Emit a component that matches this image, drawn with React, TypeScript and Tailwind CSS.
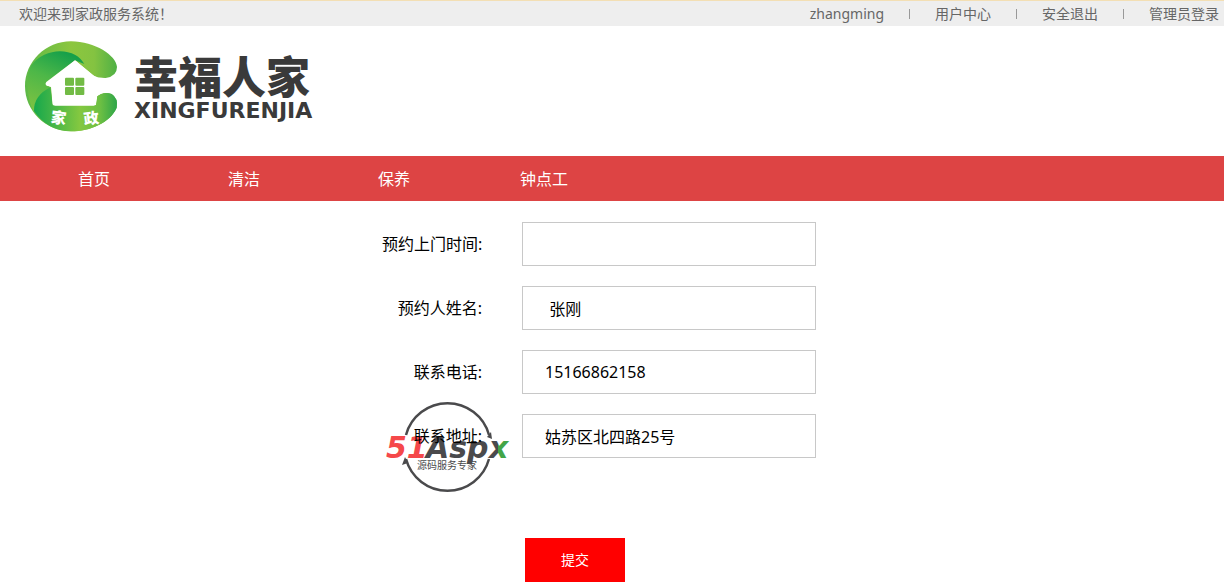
import { FC, Fragment } from "react";

const userLinks = ["zhangming", "用户中心", "安全退出", "管理员登录"];

const navItems = ["首页", "清洁", "保养", "钟点工"];

const fields = [
  { id: "time", label: "预约上门时间:", value: "" },
  { id: "name", label: "预约人姓名:", value: " 张刚" },
  { id: "phone", label: "联系电话:", value: "15166862158" },
  { id: "address", label: "联系地址:", value: "姑苏区北四路25号" },
];

const HouseLogo: FC = () => (
  <svg viewBox="0 0 345 315" className="h-[105px] w-[115px]" aria-hidden="true">
    <defs>
      <linearGradient id="ring" x1="0" y1="0" x2="1" y2="0">
        <stop offset="0" stopColor="#5db947" />
        <stop offset="0.5" stopColor="#8cc63f" />
        <stop offset="0.75" stopColor="#84c341" />
        <stop offset="1" stopColor="#4fb045" />
      </linearGradient>
      <linearGradient id="leaf" x1="0.6" y1="0" x2="0.2" y2="1">
        <stop offset="0" stopColor="#16a04a" />
        <stop offset="0.45" stopColor="#4db748" />
        <stop offset="1" stopColor="#7cc242" />
      </linearGradient>
      <linearGradient id="base" x1="0" y1="0" x2="1" y2="0">
        <stop offset="0" stopColor="#16a84c" />
        <stop offset="0.55" stopColor="#84c840" />
        <stop offset="0.8" stopColor="#6cbf43" />
        <stop offset="1" stopColor="#2da549" />
      </linearGradient>
    </defs>
    <path
      d="M180 76 L236 122 Q250 130 272 129 Q306 124 306 96 C304 62 240 19 168 19 C92 19 30 80 30 154 C30 228 92 289 168 289 C226 289 286 262 305 218 Q310 190 290 177 Q266 168 247 184 L243 211 L113 211 L108 156 L92 151 Z"
      fill="url(#ring)"
    />
    <path
      d="M48 92 C82 48 140 38 181 60 Q196 68 208 87 L180 76 L94 141 L92 151 L106 157 Q64 180 57 228 C38 200 30 130 48 92 Z"
      fill="url(#leaf)"
    />
    <path
      d="M106 157 L113 211 L243 211 L247 184 Q266 168 290 177 Q310 190 305 218 C286 262 226 289 168 289 C122 289 82 266 57 228 Q56 182 106 157 Z"
      fill="url(#base)"
    />
    <path
      d="M180 76 L94 141 Q88 149 97 152 L110 155 L113 206 Q114 212 121 212 L236 212 Q243 212 243 205 L246 180 L272 172 L272 129 L246 128 L234 120 Z"
      fill="#fff"
    />
    <g fill="#72bb45">
      <rect x="150" y="128" width="27" height="24" rx="3" />
      <rect x="181" y="128" width="27" height="24" rx="3" />
      <rect x="150" y="156" width="27" height="24" rx="3" />
      <rect x="181" y="156" width="27" height="24" rx="3" />
    </g>
    <g
      className="font-['Noto_Sans_CJK_SC',sans-serif] font-black"
      fill="#fff"
      fontSize="46"
      textAnchor="middle"
    >
      <text x="131" y="265" transform="rotate(8 131 248)">家</text>
      <text x="229" y="267" transform="rotate(-8 229 250)">政</text>
    </g>
  </svg>
);

const Watermark: FC = () => (
  <svg
    viewBox="0 0 124 92"
    className="pointer-events-none absolute -top-3 left-1 h-[92px] w-[124px]"
    aria-hidden="true"
  >
    <defs>
      <linearGradient id="xmark" x1="0" y1="0" x2="1" y2="0">
        <stop offset="0.5" stopColor="#4a4a4c" />
        <stop offset="0.5" stopColor="#43a548" />
      </linearGradient>
    </defs>
    <g fill="none" stroke="#4a4a4c" strokeWidth="2.5">
      <path d="M20 33 A43 43 0 0 1 103 33" />
      <path d="M20 57 A43 43 0 0 0 103 57" />
    </g>
    <path d="M16 63 L19 55 L22 61 Z M101 35 L105 30 L106 37 Z" fill="#4a4a4c" />
    <g
      className="font-['DejaVu_Sans',sans-serif] font-bold italic"
      fontSize="30"
    >
      <text x="0" y="56" fill="#f5484a">51</text>
      <text x="40" y="56" fill="#4a4a4c">Asp</text>
      <text x="103" y="56" fill="url(#xmark)">x</text>
    </g>
    <text
      x="61"
      y="67"
      className="font-['Noto_Sans_CJK_SC',sans-serif]"
      fontSize="10"
      fill="#4a4a4c"
      textAnchor="middle"
    >
      源码服务专家
    </text>
  </svg>
);

const App: FC = () => {
  return (
    <div className="bg-white font-['Noto_Sans','Noto_Sans_CJK_SC',sans-serif] text-base text-black">
      <div className="flex h-[26px] items-center justify-between border-t border-[#f3dfb4] bg-[#eee] pr-[5px] pl-[19px] text-sm text-[#666]">
        <p>欢迎来到家政服务系统！</p>
        <div className="flex items-center gap-[25px]">
          {userLinks.map((link, i) => (
            <Fragment key={link}>
              {i > 0 && <span className="h-2.5 w-px bg-[#999]" />}
              <a href="#">{link}</a>
            </Fragment>
          ))}
        </div>
      </div>

      <header className="flex h-[130px] items-start gap-1 pt-[9px] pl-[15px]">
        <HouseLogo />
        <div className="pt-4 text-[#3a3a3a]">
          <p className="font-['Noto_Sans_CJK_SC',sans-serif] text-[44px] leading-[48px] font-black">
            幸福人家
          </p>
          <p className="font-['DejaVu_Sans',sans-serif] text-[22px] leading-6 font-bold">
            XINGFURENJIA
          </p>
        </div>
      </header>

      <nav className="h-[45px] bg-[#dd4444] pl-[19px] text-white">
        <ul className="flex h-full items-center">
          {navItems.map((item) => (
            <li key={item} className="w-[150px] text-center">
              <a href="#">{item}</a>
            </li>
          ))}
        </ul>
      </nav>

      <form
        className="mx-auto w-[460px] pt-[21px] pb-1.5"
        onSubmit={(e) => e.preventDefault()}
      >
        <div className="flex flex-col gap-5">
          {fields.map((field) => (
            <div key={field.id} className="relative flex items-center gap-10">
              {field.id === "address" && <Watermark />}
              <label
                htmlFor={field.id}
                className="relative w-[100px] text-right whitespace-nowrap"
              >
                {field.label}
              </label>
              <input
                id={field.id}
                type="text"
                defaultValue={field.value}
                className="h-11 w-[294px] border border-[#c8c8c8] bg-white px-[22px] outline-none"
              />
            </div>
          ))}
        </div>
        <button
          type="submit"
          className="mt-20 ml-[143px] block h-11 w-[100px] bg-[#ff0000] text-sm text-white"
        >
          提交
        </button>
      </form>
    </div>
  );
};

export default App;
